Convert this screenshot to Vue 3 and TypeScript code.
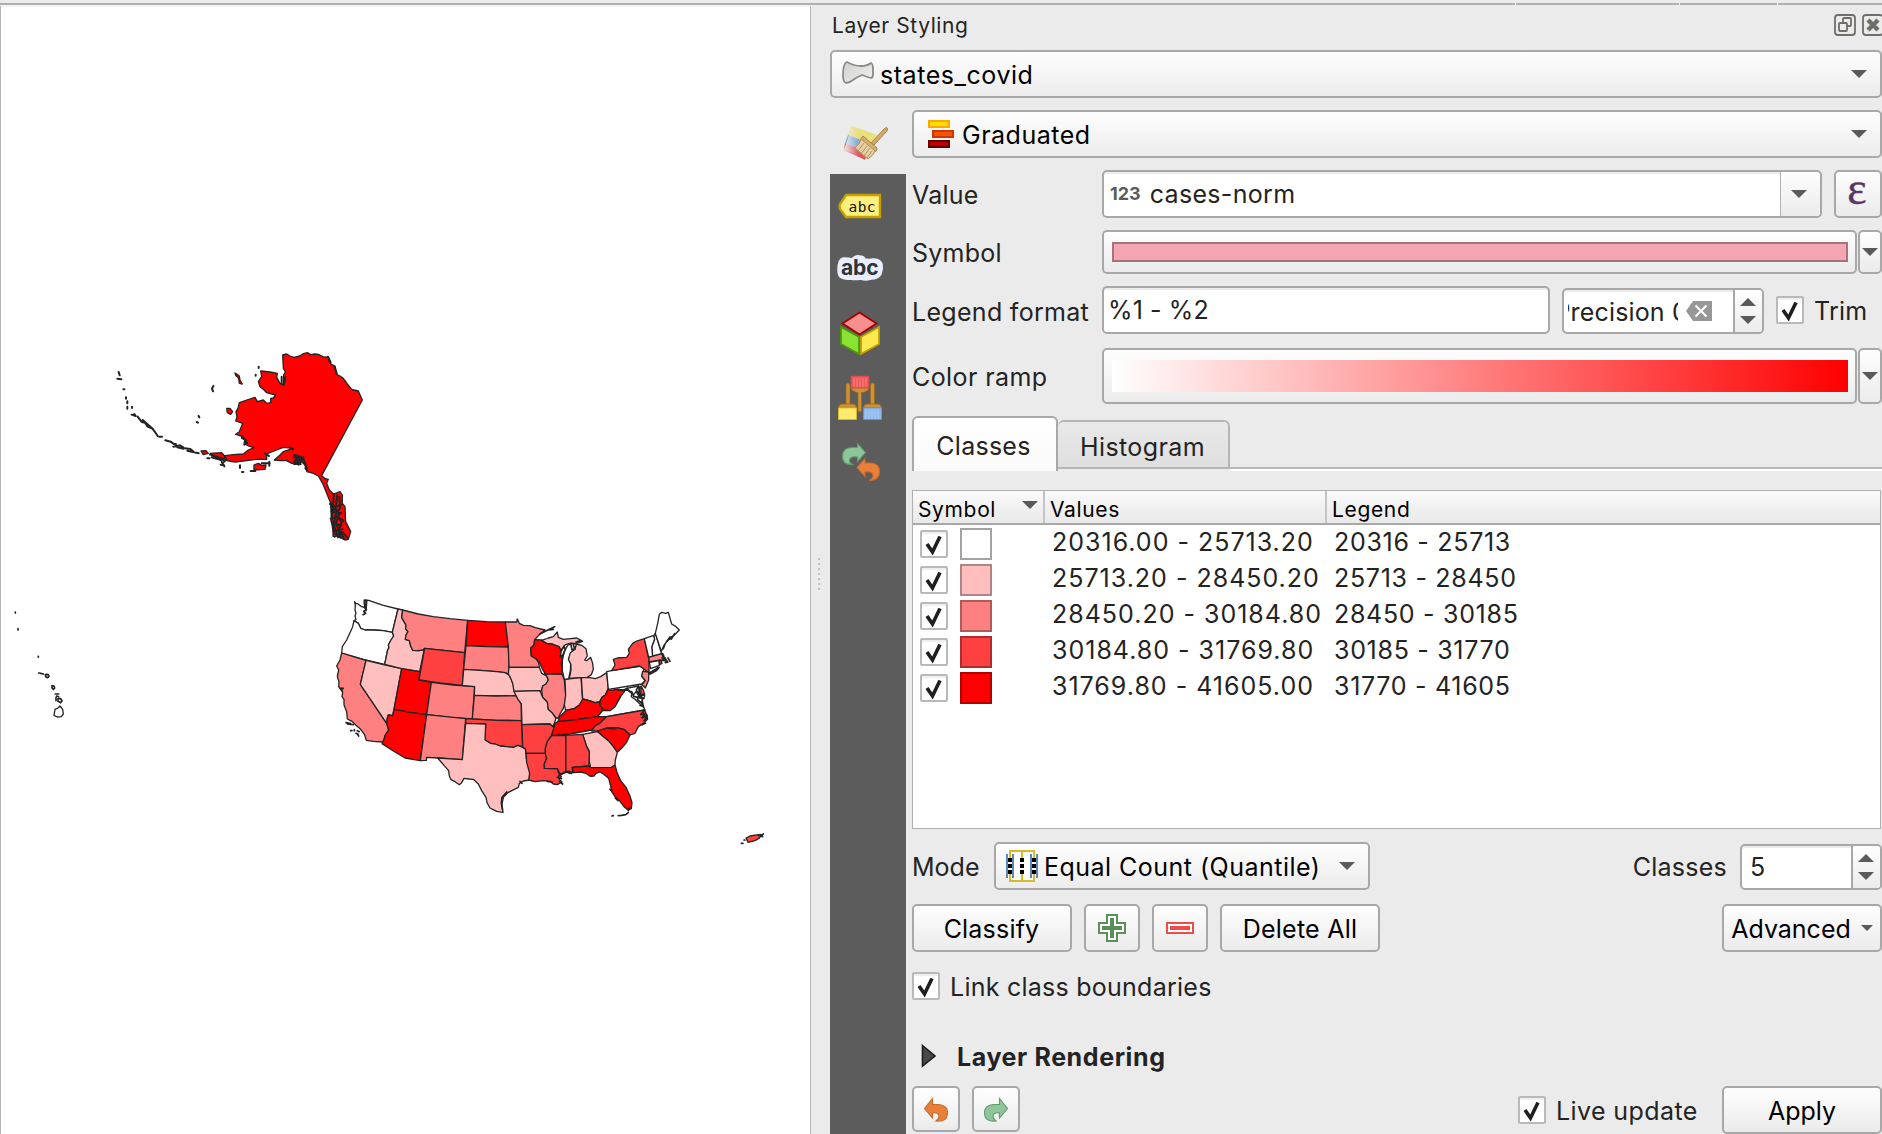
<script setup lang="ts">
interface Region { fill: string; points: string }
interface ClassRow { fill: string; edge: string; values: string; legend: string }

const C1 = '#ffffff'
const C2 = '#ffbfbf'
const C3 = '#ff8080'
const C4 = '#ff4040'
const C5 = '#ff0000'

const rows: ClassRow[] = [
  { fill: C1, edge: '#a3a3a3', values: '20316.00 - 25713.20', legend: '20316 - 25713' },
  { fill: C2, edge: '#b08484', values: '25713.20 - 28450.20', legend: '25713 - 28450' },
  { fill: C3, edge: '#b05a5a', values: '28450.20 - 30184.80', legend: '28450 - 30185' },
  { fill: C4, edge: '#b02d2d', values: '30184.80 - 31769.80', legend: '30185 - 31770' },
  { fill: C5, edge: '#b00000', values: '31769.80 - 41605.00', legend: '31770 - 41605' },
]

/* Western states, in thirds of a pixel from (320, 580) */
const west: Region[] = [
  { fill: C1, points: '104,65 107,70 113,71 125,80 133,82 136,60 146,61 190,76 234,87 217,157 190,152 160,150 135,150 122,145 115,130 102,122 108,118 105,108 108,100 105,90 106,78' },
  { fill: C1, points: '102,122 115,130 122,145 135,150 160,150 190,152 217,157 221,168 213,180 205,195 207,203 203,210 194,253 130,238 65,219 67,200 80,180 90,158 98,140' },
  { fill: C3, points: '65,219 100,230 138,241 121,313 200,430 206,450 196,465 190,486 160,484 139,481 134,465 122,448 108,436 96,424 82,417 80,395 72,375 72,358 66,350 68,336 56,320 57,306 52,290 56,270 50,258 60,240' },
  { fill: C2, points: '138,241 190,254 245,266 222,388 218,407 205,405 202,414 200,430 121,313' },
  { fill: C2, points: '234,87 248,90 245,112 252,125 258,135 257,147 264,155 258,165 256,178 268,182 272,198 278,211 295,212 308,210 312,212 299,275 245,266 194,253 203,210 207,203 205,195 213,180 221,168 217,157' },
  { fill: C3, points: '248,90 295,102 340,110 390,116 443,121 434,218 370,211 314,205 308,210 295,212 278,211 272,198 268,182 256,178 258,165 264,155 257,147 258,135 252,125 245,112' },
  { fill: C4, points: '314,205 370,211 434,218 427,316 360,309 297,300' },
  { fill: C5, points: '245,266 299,275 297,300 334,307 320,404 270,397 222,388' },
  { fill: C5, points: '222,388 270,397 320,404 301,542 255,534 220,513 186,491 192,478 196,465 206,450 203,440 200,430 202,414 205,405 218,407' },
  { fill: C3, points: '334,307 400,315 464,320 457,417 390,412 320,404' },
  { fill: C3, points: '320,404 437,416 427,539 353,534 320,532 319,541 301,542' },
  { fill: C5, points: '443,121 500,125 556,126 560,150 563,170 565,201 500,200 438,197' },
  { fill: C3, points: '438,197 500,200 565,201 566,225 567,283 555,278 530,275 480,271 431,268' },
  { fill: C2, points: '431,268 480,271 530,275 555,278 567,285 575,300 581,318 588,347 525,348 463,346 464,320 427,316' },
  { fill: C3, points: '463,346 525,348 588,347 597,360 604,372 604,422 530,421 457,417' },
  { fill: C4, points: '437,416 530,421 604,422 606,450 608,500 594,496 580,502 560,500 540,498 525,492 512,490 495,480 497,432 437,430' },
  { fill: C2, points: '437,430 497,432 495,480 512,490 525,492 540,498 560,500 580,502 594,496 608,502 618,508 619,535 630,560 628,600 610,603 598,610 595,622 565,637 550,652 546,672 549,697 530,694 510,684 501,668 498,652 485,632 475,612 460,598 448,597 432,595 425,608 418,614 405,605 393,599 388,588 386,572 372,556 353,534 427,539' },
]

/* Eastern states, in thirds of a pixel from (500, 580) */
const east: Region[] = [
  { fill: C3, points: '16,126 50,126 52,117 58,130 70,136 90,137 106,143 135,150 120,162 104,179 102,195 92,205 94,228 108,236 116,248 118,262 27,262 25,200' },
  { fill: C2, points: '27,262 118,262 125,280 140,288 145,300 138,312 128,318 125,332 42,334 38,310 30,290 25,282' },
  { fill: C2, points: '42,334 120,332 128,352 142,366 145,388 158,400 168,414 164,428 158,440 150,432 66,434 64,372 54,358 48,347' },
  { fill: C4, points: '66,434 150,432 158,440 165,437 155,465 142,485 136,505 136,520 78,520 76,506 68,502' },
  { fill: C4, points: '78,520 136,520 140,535 133,552 133,565 172,566 176,580 184,590 176,596 186,606 172,614 160,612 150,604 130,602 105,605 86,600 89,580 80,548' },
  { fill: C3, points: '133,280 186,282 193,300 197,345 196,365 190,385 180,402 176,414 168,414 158,400 145,388 142,366 128,352 125,332 128,318 138,312 145,300 140,288' },
  { fill: C5, points: '104,179 125,180 140,190 158,192 178,200 184,212 180,232 190,222 184,245 186,282 136,282 126,265 118,246 108,236 94,228 92,205 102,195' },
  { fill: C2, points: '125,181 145,174 160,170 172,156 175,172 190,178 212,176 230,174 248,184 230,190 210,190 196,194 184,212 178,200 158,192 140,190' },
  { fill: C2, points: '208,295 213,270 212,252 205,240 207,222 216,212 224,208 228,192 245,196 258,206 262,228 254,240 260,242 272,232 278,250 280,268 274,284 262,292 244,293' },
  { fill: C2, points: '195,298 243,293 248,363 238,375 222,386 197,391 193,375 197,345' },
  { fill: C2, points: '244,293 270,293 286,296 302,290 320,278 325,325 316,345 306,352 298,366 285,368 268,362 248,357' },
  { fill: C5, points: '174,425 178,410 190,400 197,391 222,386 238,375 248,357 268,362 285,368 298,366 304,382 308,392 293,410 230,419' },
  { fill: C5, points: '165,430 174,425 230,419 293,410 320,410 298,430 275,450 210,462 155,467' },
  { fill: C5, points: '325,327 330,331 352,328 370,330 382,324 370,340 362,350 352,368 345,380 330,392 312,390 300,378 300,366 306,352 316,345' },
  { fill: C1, points: '293,410 308,392 330,392 345,380 352,368 362,350 378,328 395,340 394,350 405,358 420,372 430,378 434,390 320,410' },
  { fill: C1, points: '320,275 338,271 425,258 432,268 425,288 435,302 425,312 325,328' },
  { fill: C4, points: '335,272 345,255 340,238 352,234 380,232 388,220 385,208 398,190 410,183 433,176 438,200 447,240 447,278 425,262 418,258' },
  { fill: C1, points: '433,176 462,166 464,178 456,200 458,228 446,232' },
  { fill: C1, points: '466,160 485,222 458,228 456,200 464,178 462,166' },
  { fill: C1, points: '466,160 473,130 478,103 485,97 497,100 505,97 515,132 528,140 538,150 520,168 500,184 490,200 484,214' },
  { fill: C3, points: '446,232 488,220 492,228 486,234 494,242 502,244 482,240 448,246' },
  { fill: C1, points: '448,247 477,242 478,256 452,266' },
  { fill: C4, points: '478,242 484,242 486,250 480,254' },
  { fill: C4, points: '446,282 462,270 478,262 470,272 452,282' },
  { fill: C3, points: '428,274 446,276 446,300 436,324 426,314 436,302 425,288' },
  { fill: C1, points: '380,325 415,318 420,345 434,346 432,356 418,350 408,335 400,345 392,335' },
  { fill: C4, points: '423,318 430,330 434,344 422,342' },
  { fill: C4, points: '320,410 434,390 440,405 443,418 430,430 415,440 405,460 390,465 372,448 342,443 320,444 293,453 275,453 285,438 300,430' },
  { fill: C5, points: '293,453 320,444 342,447 352,443 372,448 390,465 380,487 365,505 352,517 340,500 325,482 310,470' },
  { fill: C2, points: '248,463 293,455 310,470 325,482 340,500 352,517 346,540 345,555 335,562 272,563 267,540 268,515 260,500' },
  { fill: C4, points: '197,466 248,463 260,500 268,515 267,558 217,562 218,578 208,580 197,575' },
  { fill: C4, points: '155,467 197,466 197,578 180,582 172,566 133,565 133,552 140,535 136,520 136,505 142,485' },
  { fill: C5, points: '217,562 267,558 272,563 335,562 345,555 352,580 362,602 378,622 390,648 396,668 394,686 384,690 372,680 360,664 345,650 335,635 332,618 326,595 310,582 300,576 288,580 282,588 270,589 258,580 242,576 220,578' },
]
</script>

<template>
  <div class="window">
    <div class="topline"><i></i><i></i><i></i><i></i></div>
    <div class="main">
      <div class="map">
        <svg viewBox="1 5 809 1129" width="809" height="1129">
          <g class="states" transform="translate(320 580) scale(.33333)">
            <polygon v-for="(s, i) in west" :key="i" :points="s.points" :fill="s.fill" />
            <path class="coast" d="M133 60v12l6 4-6 6 6 6-8 6 6 6-8 4M140 62l-2 30M60 325h10M66 324v8M78 428l14 3M82 432l18 2M92 452h4M103 449v4M112 462l4 6M112 452l6 3M108 460l6 2M560 636l-12 14-4 18 3 20M558 640l-12 12-2 20" />
          </g>
          <g class="states" transform="translate(500 580) scale(.33333)">
            <polygon v-for="(s, i) in east" :key="i" :points="s.points" :fill="s.fill" />
            <path class="lake" d="M193 298l-6-26 0-30 6-28 10-18 12-6 14 2-4 16-14 10-6 20 7 14-1 20-5 24z" />
            <path class="coast" d="M120 162l28-14 16-8M146 150l14-2M184 212l8-14 4 10-6 14M212 190l4 20 8-4-4-12M228 186l14-4M415 318l-6 12 8 16-4 10M420 320l-3 16 6 14 4-4M395 335l6 14M404 350l26 6M412 358l16 14-2-12 4 20-10-4M434 390l-12 14 14-4-10 14 16-8-10 16 10-8M425 435l12-6M500 185l10-14 4 6 10-16M516 170l-8 8M490 206l4-12M494 232l6 10-4 6 8-2M504 234l6 10M486 222l6 14 4 2M448 278l18-8 8-8M172 592l12 4M178 604l10 8M176 588l14-8M190 578l18-4 6 6M200 574l14 2M142 604l14 2M60 604l6 6M336 708l4-1M355 707l10-1 12-2 8-6M330 628l4 4M346 654l8 8M385 692l4-10M352 328l20 4 10-4" />
          </g>
          <g class="states" transform="translate(100 340) scale(.33333)">
            <polygon :fill="C5" points="548,45 560,42 570,48 582,52 600,48 608,42 622,38 632,44 645,42 655,43 668,50 685,52 690,70 696,74 705,78 708,102 720,108 730,115 742,132 755,148 775,153 787,180 665,407 676,416 685,418 680,430 688,450 700,462 720,455 727,465 727,490 735,500 737,545 752,575 745,598 735,600 715,590 700,580 694,540 692,490 680,460 668,430 655,408 640,400 622,395 615,375 605,365 575,370 560,362 540,362 523,360 540,345 550,335 580,325 550,322 530,330 500,342 500,358 470,358 440,362 405,366 380,362 375,347 400,344 430,342 445,330 462,323 445,318 435,312 438,300 425,295 425,288 407,283 418,275 428,250 407,243 411,232 408,215 414,205 418,188 440,180 465,172 472,185 490,180 500,190 512,188 512,175 520,174 527,165 500,158 490,148 480,140 475,125 485,110 482,93 510,96 532,100 530,112 540,130 551,135 551,105 556,95 550,85" />
            <polygon :fill="C5" points="380,205 390,205 398,215 392,223 382,218" />
            <polygon :fill="C5" points="462,375 475,370 485,376 498,375 495,388 462,390" />
            <polygon :fill="C5" points="303,333 318,332 325,340 310,344" />
            <polygon :fill="C5" points="330,340 365,338 374,348 372,362 345,352" />
            <polygon :fill="C5" points="405,99 410,102 418,108 420,120 427,132 418,130 416,115 407,106" />
            <path class="coast rough" d="M56 96l3 10M52 116l12 2M70 148h3M78 172v4M82 184v6M82 200v6M96 200v4M95 224l12 4-4-6M113 230l12 16 10 2 8 12 14 6 8 10 8 12M128 240l30 26M178 290h8M196 301l16 4 8 6 8 2M220 320l20-4 10 6M232 322l18 4M255 325l16 2 10 8M262 332l34 8M330 344l20 6 18 6M335 352l28 8M322 355h6M365 365l8 14M362 374l10 2M378 358l-6 8M340 138l-4 8 3 8M296 228l2 4M290 246l4 2M476 80v4M467 104v3M420 376v8M426 396h4M452 393h14M508 365v12M485 370h24M495 340l12 8M570 322l8 6M582 345l26 8M580 352l30 4-8 10-16-6-4 12 20 0M590 346l4 26M610 352l2 12M600 348l-4 26M425 288l14 16M435 300l-2 14 8-6M545 110v22M556 112l-5 22M684 50l8 18M704 80l6 20M692 490l6 24-4 30 8 16-2 28M694 500l6 4M702 462l-4 40 10 20-8 30 14 40M712 465l-6 40 12 16-10 26 14 46M718 470l2 34-14 24 20 16-8 22 14 30M690 492l18 8 16-6M694 514l30 6M692 536l20-6 18 12M698 552l26 4M700 574l28-6M704 590l24-14 14 18M612 362l8 24M616 384l6 10" />
          </g>
          <g class="states" transform="translate(0 590) scale(.33333)">
            <path class="coast" d="M46 66v3M54 116v4M115 199v3M116 249h3M122 250l8 2M136 254l8-1 3 6-4 4-6-3zM156 287l6 1 2 6-4 4-4-4zM166 312h10M170 318l6 2M174 326l8 0 4 6-4 6-8-4zM168 322v10" />
            <polygon fill="#fff" points="180,348 188,358 190,372 184,380 172,381 162,376 165,358 174,354" />
          </g>
          <g class="states" transform="translate(720 820) scale(.33333)">
            <polygon :fill="C4" points="78,54 90,48 115,44 119,54 105,62 84,67" />
            <path class="coast" d="M64 70h5M72 60h3M118 44l10 6M122 48l8-6M122 44v6" />
          </g>
        </svg>
      </div>
      <div class="splitter"><i v-for="n in 7" :key="n"></i></div>
      <div class="dock">
        <div class="title">
          <span class="t title-t">Layer Styling</span>
          <svg class="winbtns" viewBox="1834 14 48 23" width="48" height="23" fill="none" stroke="#6f6e69" stroke-width="1.8">
            <rect x="1835" y="15" width="20" height="20" rx="3" />
            <rect x="1839" y="23" width="8" height="8" rx="1" /><path d="M1843 23v-4q0-1 1-1h6q1 0 1 1v6q0 1-1 1h-3" />
            <rect x="1863" y="15" width="20" height="20" rx="3" />
            <path d="M1868 20l10 10M1878 20l-10 10" stroke-width="4.4" />
          </svg>
        </div>
        <div class="combo">
          <svg class="lyr" viewBox="841 60 34 25" width="34" height="25"><defs><linearGradient id="pg" x2="1" y2="1"><stop offset="0" stop-color="#cfcfcf" /><stop offset="1" stop-color="#f2f2f2" /></linearGradient></defs><path d="M847 62q7 4 14 4 6 0 10-3 2 1 2 6v5q0 4-2 4-4-1-9-3-5 2-9 5-4 3-7 3-3-1-3-8 0-12 4-13z" fill="url(#pg)" stroke="#8b8b85" stroke-width="1.8" /></svg>
          <span class="t states-t">states_covid</span><b class="arr"></b>
        </div>
        <div class="body">
          <div class="side">
            <svg class="active" viewBox="830 98 76 76" width="76" height="76">
              <defs><linearGradient id="fd"><stop offset="0" stop-color="#ebebeb" /><stop offset=".45" stop-color="#ebebeb" stop-opacity="0" /></linearGradient></defs>
              <path d="M852 126l25 9-5 9-24-9z" fill="#e8e07a" /><path d="M848 135l24 9-4 8-23-9z" fill="#80a8dc" /><path d="M845 143l23 9-3 8-21-10z" fill="#df5560" />
              <path d="M852 126l25 9-10 25-23-10z" fill="url(#fd)" />
              <path d="M871 143l13-14q3-3 3.500 0 .5 1-1.500 3l-12 13z" fill="#d2a868" stroke="#a98550" stroke-width="1" />
              <path d="M863 136l14 12q1 3-3 4l-3-1-10-9q-1-4 2-6z" fill="#d7ac6c" stroke="#a98550" stroke-width="1" />
              <path d="M861 139q-1 5-6 9l13 11q6-4 7-8z" fill="#e6d0a2" stroke="#b1935f" stroke-width="1" />
              <path d="M864 143l-6 8M867 146l-6 8M870 148l-6 8M872 151l-5 7" stroke="#b1935f" stroke-width="1" />
            </svg>
            <svg viewBox="830 174 76 64" width="76" height="64">
              <path d="M846 195h34v22h-34l-6-8q-1-3 0-5z" fill="#fff07e" stroke="#c4a000" stroke-width="2.400" />
              <text x="848.500" y="211.800" class="tagabc" textLength="27">abc</text>
            </svg>
            <svg viewBox="830 238 76 60" width="76" height="60">
              <path d="M845 258q4 0 7 1 3-4 8-3 4 0 5 3 5 1 8 0 7 0 9 5 1 5-1 10-3 5-10 5-6 2-10 0-7 1-10 0-4 1-9-1-4-1-4-8 0-11 5-12z" fill="#e9eeff" stroke="#e9eeff" stroke-width="1.500" />
              <text x="841" y="274.500" class="haloabc" textLength="37.500">abc</text>
            </svg>
            <svg viewBox="830 298 76 71" width="76" height="71">
              <path d="M841 327l18 10v17l-18-10z" fill="#8ae234" stroke="#4e9a06" stroke-width="1.800" /><path d="M879 327l-18 10v17l18-10z" fill="#fce94f" stroke="#c4a000" stroke-width="1.800" /><path d="M859.500 312.500l17 11-17 11-17-11z" fill="#f78f8f" stroke="#a40000" stroke-width="1.800" />
            </svg>
            <svg viewBox="830 369 76 57" width="76" height="57">
              <g fill="#cd9136" stroke="#9b6a20" stroke-width=".8"><rect x="846" y="383" width="4" height="22" rx="2" /><rect x="870.500" y="383" width="4" height="22" rx="2" /><path d="M838.500 408q0-4 4-4h10q4 0 4 4zM863.500 408q0-4 4-4h10q4 0 4 4zM851 387h18q0 4-6 5.500h-1.500V410q0 2-1.700 2t-1.800-2v-17.500H857q-6-1.500-6-5.500z" /></g>
              <rect x="851" y="376" width="18" height="12" fill="#ee5858" stroke="#c94444" stroke-width=".8" /><rect x="838.500" y="408" width="18" height="11.500" fill="#fdea62" stroke="#e0bd26" stroke-width=".8" /><rect x="863.500" y="408" width="18" height="11.500" fill="#8db9ef" stroke="#6b98cf" stroke-width=".8" />
              <path d="M854 378v9M857 378v9M860 378v9M863 378v9M866 378v9M841 410v9M844 410v9M847 410v9M850 410v9M853 410v9M866 410v9M869 410v9M872 410v9M875 410v9M878 410v9" stroke="#fff" stroke-opacity=".3" stroke-width=".9" />
            </svg>
            <svg viewBox="830 426 76 71" width="76" height="71">
              <path d="M857.500 443.500l8 9-8 9v-4.500q-8-1-8 3.500 0 3 4 4-11 1-11-8 0-9 10-9h5z" fill="#8fc59a" stroke="#5e9a6b" stroke-width="1.100" />
              <path d="M865 458.500l-8 9 8 9V472q8-1 8 3.500 0 3-4 5 10.500 0 10.500-9t-10.500-8.500h-4z" fill="#e8803a" stroke="#c96a2c" stroke-width="1.100" />
            </svg>
          </div>
          <div class="content">
            <div class="combo c2">
              <svg class="grad" viewBox="927 119 28 30" width="28" height="30" stroke-width="2"><rect x="929" y="121" width="20" height="6" fill="#ffdd00" stroke="#ffa600" /><rect x="933" y="131" width="20" height="6" fill="#ff4f00" stroke="#c93a00" /><rect x="929" y="141" width="20" height="6" fill="#c00000" stroke="#640000" /></svg>
              <span class="t grad-t">Graduated</span><b class="arr"></b>
            </div>
            <div class="row r-value">
              <span class="lab"><span class="t">Value</span></span>
              <div class="field valuef"><span class="t num">123</span><span class="t cases">cases-norm</span><div class="drop"><b class="arr"></b></div></div>
              <div class="btn eps"><span>ε</span></div>
            </div>
            <div class="row r-symbol">
              <span class="lab"><span class="t">Symbol</span></span>
              <div class="btn wide"><div class="sym"></div></div><div class="btn mini"><b class="arr"></b></div>
            </div>
            <div class="row r-legend">
              <span class="lab"><span class="t legf">Legend format</span></span>
              <div class="field lf"><span class="t">%1 - %2</span></div>
              <div class="field spin prec">
                <div class="clip"><span class="t">Precision 0</span></div>
                <svg viewBox="0 0 26 20" width="26" height="20"><path d="M0 10L7 0h19v20H7z" fill="#979797" /><path d="M9.500 4.500l11 11M20.500 4.500l-11 11" stroke="#fff" stroke-width="2" /></svg>
                <div class="steps"><b class="up"></b><b class="arr"></b></div>
              </div>
              <span class="chk c-trim"><svg viewBox="0 0 24 24"><path d="M5 12l5.500 8L18 4.500" /></svg></span><span class="t trim">Trim</span>
            </div>
            <div class="row r-ramp">
              <span class="lab"><span class="t ramp-t">Color ramp</span></span>
              <div class="btn wide"><div class="ramp"></div></div><div class="btn mini"><b class="arr"></b></div>
            </div>
            <div class="tabs">
              <div class="tab on"><span class="t">Classes</span></div><div class="tab off"><span class="t">Histogram</span></div><div class="tabline"></div>
            </div>
            <div class="table">
              <div class="thead">
                <div class="th h1"><span class="t">Symbol</span><b class="arr"></b></div><div class="th h2"><span class="t">Values</span></div><div class="th h3"><span class="t">Legend</span></div>
              </div>
              <div v-for="r in rows" :key="r.values" class="tr">
                <span class="chk"><svg viewBox="0 0 24 24"><path d="M5 12l5.500 8L18 4.500" /></svg></span>
                <span class="sw" :style="{ background: r.fill, borderColor: r.edge }"></span>
                <span class="t val">{{ r.values }}</span><span class="t leg">{{ r.legend }}</span>
              </div>
            </div>
            <div class="row r-mode">
              <span class="t modelab">Mode</span>
              <div class="combo c3">
                <svg class="quant" viewBox="1005 849 34 34" width="34" height="34" fill="none" stroke-width="2"><rect x="1007" y="853" width="31" height="27" fill="#fff" rx="3" /><path d="M1010 858v-7h24v7M1022 851v9M1010 874v7h24v-7M1022 873v8" stroke="#d3bb2c" /><path d="M1007 854v24M1013 854v24M1031 854v24M1037 854v24" stroke="#5b87bd" /><path d="M1010 858v16M1022 858v16M1034 858v16" stroke="#000" stroke-width="4" stroke-dasharray="4 2" /></svg>
                <span class="t quant-t">Equal Count (Quantile)</span><b class="arr"></b>
              </div>
              <span class="t clab">Classes</span>
              <div class="field spin cnt"><span class="t">5</span><div class="steps"><b class="up"></b><b class="arr"></b></div></div>
            </div>
            <div class="row r-btns">
              <div class="btn b160"><span class="t cls">Classify</span></div>
              <div class="btn b56"><svg viewBox="0 0 28 28" width="28" height="28"><path d="M9 1h10v8h8v10h-8v8H9v-8H1V9h8z" fill="#fff" stroke="#5b8f5b" stroke-width="2" /><path d="M14 4v20M4 14h20" stroke="#5b8f5b" stroke-width="4" /></svg></div>
              <div class="btn b56"><svg viewBox="0 0 28 12" width="28" height="12"><path d="M1 1h26v10H1z" fill="#fff" stroke="#f04c4c" stroke-width="2" /><path d="M4 6h20" stroke="#f04c4c" stroke-width="4" /></svg></div>
              <div class="btn b160"><span class="t">Delete All</span></div>
              <div class="btn b160 adv"><span class="t tight">Advanced</span><b class="arr s"></b></div>
            </div>
            <div class="row r-link"><span class="chk"><svg viewBox="0 0 24 24"><path d="M5 12l5.500 8L18 4.500" /></svg></span><span class="t linkt">Link class boundaries</span></div>
            <div class="row r-rend"><svg viewBox="0 0 16 24" width="16" height="24"><path d="M1.500 1.500L14 12 1.500 22z" fill="#4a4a4a" stroke="#1c1c1c" stroke-width="1.600" /></svg><span class="t rend">Layer Rendering</span></div>
            <div class="row r-bot">
              <div class="btn b48"><svg viewBox="924 1095 24 25" width="24" height="25"><path d="M932.500 1096.500l-8 10 8 9.500v-5q6-1 6.500 3 0 3-3 5 11.500 1 11.500-8 0-8-9-8.500h-6z" fill="#e8803a" stroke="#c96a2c" stroke-width="1.100" /></svg></div>
              <div class="btn b48 redo"><svg viewBox="984 1095 24 25" width="24" height="25"><path d="M999.500 1096.500l8 10-8 9.500v-5q-6-1-6.500 3 0 3 3 5-11.500 1-11.500-8 0-8 9-8.500h6z" fill="#8fc59a" stroke="#5e9a6b" stroke-width="1.100" /></svg></div>
              <span class="chk c-live"><svg viewBox="0 0 24 24"><path d="M5 12l5.500 8L18 4.500" /></svg></span><span class="t livet">Live update</span>
              <div class="btn b160 apply"><span class="t tight">Apply</span></div>
            </div>
          </div>
        </div>
      </div>
    </div>
  </div>
</template>

<style>
body { margin: 0; background: #ebebeb; overflow: hidden; }
</style>
<style scoped>
* { box-sizing: border-box; }
.window { width: 1882px; height: 1134px; overflow: hidden; display: flex; flex-direction: column; background: #ebebeb; font: 25px/30px Inter, "Liberation Sans", sans-serif; color: #232323; }
.window svg { display: block; flex: none; }
.t { white-space: pre; flex: none; letter-spacing: .25px; padding-top: 2px; }
.tight { letter-spacing: 0; }
.cls { letter-spacing: .2px; margin-right: 1px; }
.topline { flex: none; height: 5px; padding-top: 3px; display: flex; gap: 1px; }
.topline i { height: 2px; background: #b0b0b0; width: 201px; flex: none; }
.topline i:first-child { width: 1515px; }
.topline i:nth-child(2) { width: 163px; }
.topline i:nth-child(3) { width: 97px; }
.topline i:nth-child(4) { width: 104px; }
.main { flex: none; height: 1129px; display: flex; }
.map { flex: none; width: 811px; background: #fff; border-left: 1px solid #b4b4b4; border-right: 1px solid #b4b4b4; border-top: 2px solid #f4f4f4; }
.map svg { margin-top: -2px; }
.states { stroke: #232323; stroke-width: 3.900; stroke-linejoin: round; }
.coast { fill: none; stroke-linecap: round; stroke-width: 5; }
.rough { stroke-width: 6; }
.lake { fill: #fff; }
.splitter { flex: none; width: 19px; padding: 553px 0 0 7px; display: flex; flex-direction: column; gap: 3px; }
.splitter i { width: 2px; height: 2px; background: #c2c2c2; }
.dock { flex: none; width: 1052px; display: flex; flex-direction: column; }
.title { height: 45px; flex: none; display: flex; align-items: center; justify-content: space-between; padding: 0 0 5px 2px; font-size: 21px; }
.title-t { letter-spacing: .58px; }
.combo { flex: none; height: 48px; border: 2px solid #a8a8a8; border-radius: 5px; background: linear-gradient(#fefefe, #ececec); display: flex; align-items: center; color: #000; padding: 0 13px 0 9px; }
.arr, .up { flex: none; width: 0; height: 0; border: 8px solid transparent; border-bottom: 0; border-top-color: #5a5a5a; margin-left: auto; }
.up { border: 8px solid transparent; border-top: 0; border-bottom-color: #5a5a5a; }
.arr.s { border-width: 6px 6px 0; }
.lyr { margin-top: -3px; }
.states-t { margin-left: 5px; letter-spacing: .55px; }
.body { flex: 1; display: flex; }
.side { flex: none; width: 76px; background: #5c5c5c; }
.active { background: #ebebeb; }
.tagabc { font: 14.500px "DejaVu Sans Mono", monospace; fill: #111; }
.haloabc { font: bold 21px Inter, sans-serif; fill: #2e3436; }
.content { margin-left: 6px; width: 970px; padding-top: 12px; display: flex; flex-direction: column; }
.c2 { padding-left: 13px; }
.grad-t { margin-left: 7px; letter-spacing: .5px; }
.row { flex: none; display: flex; align-items: center; }
.lab { width: 190px; flex: none; display: flex; }
.legf { padding-top: 3px; letter-spacing: .3px; }
.ramp-t { letter-spacing: .4px; }
.field { border: 2px solid #a8a8a8; border-radius: 5px; background: #fff; box-shadow: inset 0 2px 0 #ececec; display: flex; align-items: center; height: 100%; flex: none; }
.field .t { padding-top: 0; }
.btn { border: 2px solid #a8a8a8; border-radius: 5px; background: linear-gradient(#fefefe, #ebebeb); display: flex; align-items: center; justify-content: center; color: #000; height: 100%; flex: none; }
.r-value { height: 48px; margin-top: 12px; }
.valuef { width: 720px; }
.num { font-size: 18px; font-weight: 700; color: #5c5c5c; margin-left: 6px; letter-spacing: 0; }
.cases { margin-left: 9px; letter-spacing: .32px; }
.drop { margin-left: auto; width: 40px; height: 44px; border-left: 1px solid #b0b0b0; background: linear-gradient(#fefefe, #ebebeb); border-radius: 0 4px 4px 0; display: flex; align-items: center; padding-right: 13px; }
.eps { width: 48px; margin-left: 12px; font: 400 46px/40px "Liberation Serif", serif; color: #5c3566; -webkit-text-stroke: .4px #5c3566; }
.eps span { margin: -11px 2px 0 0; }
.r-symbol { height: 44px; margin-top: 12px; }
.wide { width: 755px; }
.sym { width: 736px; height: 20px; background: #f4a5b2; border: 2px solid #a5737c; }
.mini { width: 24px; margin-left: 1px; }
.mini .arr { margin: 0; }
.r-legend { height: 48px; margin-top: 12px; }
.lf { width: 448px; padding-left: 4px; }
.lf .t { letter-spacing: .1px; }
.prec { width: 202px; height: 46px; margin-left: 12px; margin-top: 2px; }
.clip { width: 110px; height: 34px; margin: 2px 8px 0 4px; overflow: hidden; display: flex; align-items: center; }
.clip .t { margin-left: -13.500px; letter-spacing: .15px; }
.steps { margin-left: auto; width: 29px; height: 42px; border-left: 2px solid #a8a8a8; border-radius: 0 3px 3px 0; background: linear-gradient(#fefefe, #ececec); display: flex; flex-direction: column; align-items: center; justify-content: center; gap: 10px; padding-right: 1px; }
.steps b { margin: 0; }
.chk { width: 28px; height: 28px; flex: none; border: 2px solid #b9b9b9; background: #fff; box-shadow: inset 0 2px 0 #efefef; border-radius: 2px; display: flex; }
.chk svg { width: 24px; height: 24px; }
.chk path { fill: none; stroke: #1e1e1e; stroke-width: 3.600; }
.c-trim { margin-left: 12px; }
.trim { margin-left: 10px; }
.r-ramp { height: 56px; margin-top: 14px; }
.ramp { width: 736px; height: 32px; background: linear-gradient(90deg, #fff, #f00); }
.tabs { height: 56px; margin-top: 12px; flex: none; display: flex; align-items: flex-start; }
.tab { flex: none; display: flex; align-items: center; justify-content: center; border: 2px solid #a8a8a8; border-radius: 6px 6px 0 0; }
.on { width: 146px; height: 55px; border-bottom: 0; background: linear-gradient(#fff, #fafafa); padding-right: 3px; }
.off { width: 172px; height: 49px; margin-top: 4px; border-left: 0; border-color: #b5b5b5; background: linear-gradient(#e9e9e9, #dfdfdf); padding-top: 3px; padding-right: 1px; }
.off .t { letter-spacing: .4px; }
.tabline { flex: 1; height: 4px; margin-top: 51px; border-top: 2px solid #b8b8b8; border-bottom: 2px solid #fff; }
.table { height: 339px; margin-top: 18px; flex: none; width: 969px; border: 1px solid #b0b0b0; background: #fff; }
.thead { display: flex; height: 34px; font-size: 21px; color: #000; background: linear-gradient(#fafafa, #e9e9e9); border-bottom: 2px solid #a8a8a8; margin-bottom: 1px; }
.th { display: flex; align-items: center; border-right: 2px solid #c4c4c4; padding: 3px 5px 0 5px; }
.th .t { letter-spacing: .65px; }
.th .arr { margin-bottom: 8px; }
.h1 { width: 132px; }
.h2 { width: 282px; }
.h3 { flex: 1; border: 0; }
.tr { height: 36px; display: flex; align-items: flex-start; padding: 2px 0 0 7px; }
.tr .chk { margin-top: 2px; }
.tr .t { margin-top: -3px; }
.sw { width: 32px; height: 32px; margin-left: 12px; border: 2px solid; flex: none; }
.val { width: 282px; margin-left: 60px; letter-spacing: 1px; }
.leg { letter-spacing: .7px; }
.r-mode { height: 48px; margin-top: 13px; }
.modelab { width: 82px; letter-spacing: 0; }
.c3 { width: 376px; padding-left: 9px; }
.quant-t { margin-left: 5px; letter-spacing: .48px; }
.clab { margin-left: auto; margin-right: 13px; }
.cnt { width: 142px; height: 46px; padding-left: 8px; margin-top: 2px; }
.r-btns { height: 48px; margin-top: 14px; gap: 12px; }
.b160 { width: 160px; }
.b56 { width: 56px; }
.b48 { width: 48px; }
.adv { margin-left: auto; }
.adv .arr { margin-left: 10px; }
.r-link { height: 28px; margin-top: 20px; }
.linkt { margin-left: 10px; }
.r-rend { height: 32px; margin-top: 40px; padding-left: 9px; }
.rend { font-weight: 700; margin-left: 20px; letter-spacing: .6px; }
.r-bot { height: 48px; margin-top: 14px; }
.r-bot .b48 { height: 46px; margin-bottom: 2px; }
.redo { margin-left: 12px; }
.c-live { margin-left: auto; }
.livet { margin-left: 10px; width: 166px; letter-spacing: .4px; }
</style>
